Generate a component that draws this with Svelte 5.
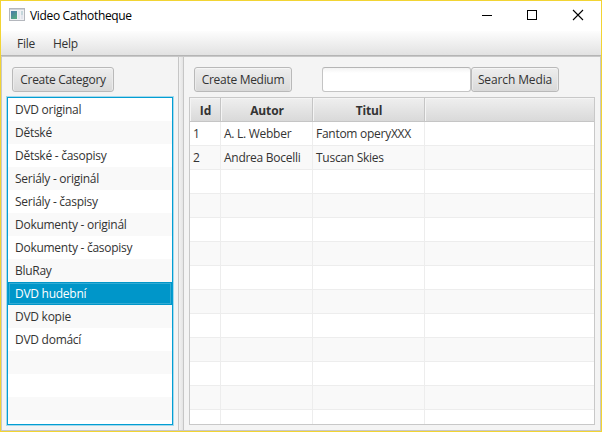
<script>
  const categories = [
    'DVD original', 'Dětské', 'Dětské - časopisy', 'Seriály - originál', 'Seriály - časpisy',
    'Dokumenty - originál', 'Dokumenty - časopisy', 'BluRay', 'DVD hudební', 'DVD kopie', 'DVD domácí',
    '', '', '', ''
  ];
  let selected = $state(8);
  const media = [
    ['1', 'A. L. Webber', 'Fantom operyXXX'],
    ['2', 'Andrea Bocelli', 'Tuscan Skies'],
    ...Array.from({ length: 11 }, () => ['', '', ''])
  ];
</script>

<div class="window">
  <header class="titlebar">
    <svg class="appicon" width="16" height="13" viewBox="0 0 16 13">
      <defs>
        <linearGradient id="g" x1="0" y1="0" x2="0.6" y2="1">
          <stop offset="0" stop-color="#4a78ac" />
          <stop offset="1" stop-color="#54a882" />
        </linearGradient>
      </defs>
      <rect x="0.5" y="0.5" width="15" height="12" fill="#f0f1f4" stroke="#b4b7bd" />
      <rect x="1" y="1" width="14" height="1" fill="#d0d3da" />
      <rect x="2" y="3" width="6" height="8" fill="url(#g)" />
      <rect x="9" y="3" width="2" height="8" fill="#e3e6ef" />
      <rect x="12" y="3" width="2" height="4" fill="#c5d7dc" />
      <rect x="12" y="7" width="2" height="4" fill="#e2e4ec" />
    </svg>
    <span class="title">Video Cathotheque</span>
    <svg class="controls" width="104" height="12" viewBox="0 0 104 12" fill="none" stroke="#000" shape-rendering="crispEdges">
      <path d="M0 6.5h10" />
      <rect x="45.5" y="1.5" width="9" height="9" />
      <path d="M91 1l10 10M101 1l-10 10" shape-rendering="auto" stroke-width="1.1" />
    </svg>
  </header>
  <nav class="menubar"><span class="file">File</span><span>Help</span></nav>
  <main class="split">
    <section class="left">
      <button class="btn category">Create Category</button>
      <div class="list">
        {#each categories as name, i}
          <div class="item" class:selected={i === selected}>{name}</div>
        {/each}
      </div>
    </section>
    <div class="divider"></div>
    <section class="right">
      <div class="tools">
        <button class="btn medium">Create Medium</button>
        <input type="text" aria-label="Search" />
        <button class="btn search">Search Media</button>
      </div>
      <div class="table">
        <div class="row head"><div>Id</div><div>Autor</div><div>Titul</div><div></div></div>
        {#each media as m}
          <div class="row"><div>{m[0]}</div><div>{m[1]}</div><div>{m[2]}</div><div></div></div>
        {/each}
      </div>
    </section>
  </main>
</div>

<style>
  .window, .window * { box-sizing: border-box; }
  .window {
    width: 602px; height: 432px; border: 1px solid #f2d433; background: #f4f4f4;
    display: flex; flex-direction: column; overflow: hidden;
    font: 12px/16px "Open Sans", "Noto Sans", sans-serif; letter-spacing: -0.27px;
    color: #333; white-space: nowrap;
  }
  .titlebar { height: 30px; flex: none; background: #fff; display: flex; align-items: flex-start; padding: 0 15px 0 8px; }
  .appicon { margin-top: 7px; }
  .title { margin: 7px 0 0 5px; color: #000; letter-spacing: -0.34px; }
  .controls { margin: 8px 0 0 auto; }
  .menubar {
    height: 25px; flex: none; padding: 5px 16px; display: flex; gap: 18px;
    background: linear-gradient(#fdfdfd, #e2e2e2); border-bottom: 1px solid #b5b5b5;
  }
  .split { flex: 1; min-height: 0; display: flex; border: 1px solid #c8c8c8; }
  .left { width: 176px; padding: 10px 5px 5px 5px; display: flex; flex-direction: column; }
  .divider { width: 6px; border: 1px solid #c6c6c6; border-width: 0 1px; background: linear-gradient(90deg, #f2f2f2, #e4e4e4); }
  .right { flex: 1; padding: 10px 5px 5px 5px; display: flex; flex-direction: column; }
  .btn {
    height: 25px; border: 1px solid #b9b9b9; border-radius: 3px; padding: 0; margin: 0; flex: none;
    background: linear-gradient(#eee, #d9d9d9); box-shadow: inset 0 1px #f6f6f6, inset 1px 0 #ebebeb, inset -1px 0 #ebebeb;
    font: inherit; letter-spacing: -0.3px; color: #333; text-align: center;
  }
  .category { width: 102px; margin-left: 5px; }
  .medium { width: 98px; }
  .search { width: 88px; letter-spacing: -0.12px; }
  input {
    width: 149px; height: 25px; margin: 0 0 0 30px; border: 1px solid #c4c4c4; border-top-color: #b5b5b5;
    border-radius: 3px; background: linear-gradient(#f3f3f3, #fff 5px); outline: none; padding: 3px 7px; font: inherit;
  }
  .tools { display: flex; padding-left: 5px; }
  .list {
    margin: 5px 0 0 0; width: 166px; height: 328px; border: 1px solid #039ed3; background: #fff;
    box-shadow: 0 0 0 1px #a5d9ec; overflow: hidden; flex: none;
  }
  .item { height: 23px; padding: 4px 7px; }
  .item:nth-child(even) { background: #f9f9f9; }
  .item.selected { background: #0096c9; color: #fff; border: 1px solid #0096c9; padding: 3px 6px; box-shadow: inset 0 0 0 1px #32abd4; }
  .table { margin-top: 5px; width: 406px; height: 328px; border: 1px solid #c8c8c8; background: #fff; overflow: hidden; flex: none; }
  .row { height: 24px; display: flex; border-bottom: 1px solid #ededed; }
  .row:nth-child(odd) { background: #f9f9f9; }
  .row div { padding: 4px 3px; border-right: 1px solid #ededed; flex: none; }
  .row div:nth-child(1) { width: 31px; }
  .row div:nth-child(2) { width: 92px; }
  .row div:nth-child(3) { width: 112px; }
  .row div:last-child { flex: 1; border: 0; }
  .row.head { background: linear-gradient(#efefef, #d9d9d9); border-color: #c5c5c5; }
  .row.head div { font-weight: 700; letter-spacing: -0.15px; text-align: center; padding: 5px 1px 0 2px; border-color: #c5c5c5; box-shadow: inset 1px 1px #f4f4f4; }
</style>
